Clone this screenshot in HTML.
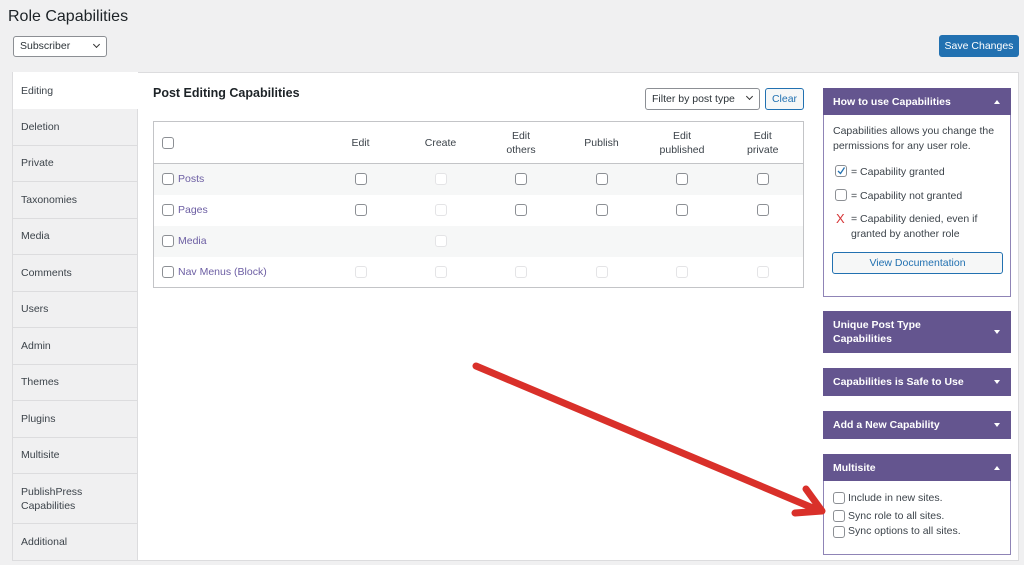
<!DOCTYPE html>
<html><head><style>
*{box-sizing:border-box;margin:0;padding:0}
body{width:1024px;height:565px;overflow:hidden;background:#f0f0f1;font-family:"Liberation Sans",sans-serif;color:#3c434a;position:relative;font-size:10.5px}
.a{position:absolute}
h1{position:absolute;left:8px;top:8px;font-size:16px;font-weight:400;color:#1d2327}
.sel{position:absolute;border:1px solid #8c8f94;border-radius:3px;background:#fff;font-size:10.5px;color:#2c3338;padding-left:6px;line-height:19px}
.sel:after{content:"";position:absolute;right:7px;top:5px;width:4px;height:4px;border-right:1.3px solid #333;border-bottom:1.3px solid #333;transform:rotate(45deg)}
.panel{left:12px;top:72px;width:1007px;height:489px;background:#fff;border:1px solid #dcdcde}
.tab{position:absolute;left:12px;width:126px;background:#f0f0f1;border:1px solid #dcdcde;border-top:none;padding-left:8px;display:flex;align-items:center;font-size:10.5px;color:#3c434a;line-height:14px}
.cb{position:absolute;width:12px;height:12px;border:1px solid #8c8f94;border-radius:3px;background:#fff}
.cb.d{border-color:#e4e4e6}
table{position:absolute;left:153px;top:121px;width:651px;border-collapse:collapse;border:1px solid #c3c4c7;font-size:10.5px}
td{text-align:center;height:31px;padding:0;position:relative;color:#3c434a}
tr.h td{height:42px;border-bottom:1px solid #c3c4c7;line-height:14px}
tr.s td{background:#f6f7f7}
.ph{position:absolute;left:823px;width:188px;background:#64558f;color:#fff;font-weight:700;font-size:10.5px;padding-left:10px;display:flex;align-items:center;line-height:14px}
.ph:after{content:"";position:absolute;right:11px;top:50%;margin-top:-2px;border-left:3px solid transparent;border-right:3px solid transparent;border-top:4px solid #fff}
.ph.up:after{border-top:none;border-bottom:4px solid #fff}
.pb{position:absolute;left:823px;width:188px;border:1px solid #8f84b6;border-top:none;background:#fff}
</style></head><body>
<h1>Role Capabilities</h1>
<div class="sel" style="left:13px;top:36px;width:94px;height:21px">Subscriber</div>
<div class="a" style="left:939px;top:35px;width:80px;height:22px;background:#2271b1;border-radius:3px;color:#fff;font-size:10.5px;text-align:center;line-height:22px">Save Changes</div>
<div class="a panel"></div>
<div class="tab" style="top:72px;height:37px;background:#fff;border:none;border-left:1px solid #dcdcde">Editing</div>
<div class="tab" style="top:109px;height:36.5px">Deletion</div>
<div class="tab" style="top:145.5px;height:36.5px">Private</div>
<div class="tab" style="top:182px;height:36.5px">Taxonomies</div>
<div class="tab" style="top:218.5px;height:36.5px">Media</div>
<div class="tab" style="top:255px;height:36.5px">Comments</div>
<div class="tab" style="top:291.5px;height:36.5px">Users</div>
<div class="tab" style="top:328px;height:36.5px">Admin</div>
<div class="tab" style="top:364.5px;height:36.5px">Themes</div>
<div class="tab" style="top:401px;height:36.5px">Plugins</div>
<div class="tab" style="top:437.5px;height:36.5px">Multisite</div>
<div class="tab" style="top:474px;height:50px">PublishPress<br>Capabilities</div>
<div class="tab" style="top:524px;height:37px">Additional</div>
<div class="a" style="left:153px;top:86px;font-size:12.5px;font-weight:700;color:#1d2327">Post Editing Capabilities</div>
<div class="sel" style="left:645px;top:88px;width:115px;height:22px;line-height:20px">Filter by post type</div>
<div class="a" style="left:765px;top:88px;width:39px;height:22px;border:1px solid #2271b1;border-radius:3px;color:#2271b1;text-align:center;line-height:20px;background:#f6f7f7">Clear</div>
<table>
<tr class="h"><td style="width:167px"><span class="cb" style="left:8px;top:15px"></span></td><td style="width:80px">Edit</td><td style="width:80px">Create</td><td style="width:81px">Edit<br>others</td><td style="width:80px">Publish</td><td style="width:81px">Edit<br>published</td><td>Edit<br>private</td></tr>
<tr class="s"><td style="text-align:left;padding-left:24px;color:#6c5ea3"><span class="cb" style="left:8px;top:9px"></span>Posts</td><td><span class="cb" style="left:34px;top:9px"></span></td><td><span class="cb d" style="left:34px;top:9px"></span></td><td><span class="cb" style="left:34px;top:9px"></span></td><td><span class="cb" style="left:34px;top:9px"></span></td><td><span class="cb" style="left:34px;top:9px"></span></td><td><span class="cb" style="left:34px;top:9px"></span></td></tr>
<tr><td style="text-align:left;padding-left:24px;color:#6c5ea3"><span class="cb" style="left:8px;top:9px"></span>Pages</td><td><span class="cb" style="left:34px;top:9px"></span></td><td><span class="cb d" style="left:34px;top:9px"></span></td><td><span class="cb" style="left:34px;top:9px"></span></td><td><span class="cb" style="left:34px;top:9px"></span></td><td><span class="cb" style="left:34px;top:9px"></span></td><td><span class="cb" style="left:34px;top:9px"></span></td></tr>
<tr class="s"><td style="text-align:left;padding-left:24px;color:#6c5ea3"><span class="cb" style="left:8px;top:9px"></span>Media</td><td></td><td><span class="cb d" style="left:34px;top:9px"></span></td><td></td><td></td><td></td><td></td></tr>
<tr><td style="text-align:left;padding-left:24px;color:#6c5ea3"><span class="cb" style="left:8px;top:9px"></span>Nav Menus (Block)</td><td><span class="cb d" style="left:34px;top:9px"></span></td><td><span class="cb d" style="left:34px;top:9px"></span></td><td><span class="cb d" style="left:34px;top:9px"></span></td><td><span class="cb d" style="left:34px;top:9px"></span></td><td><span class="cb d" style="left:34px;top:9px"></span></td><td><span class="cb d" style="left:34px;top:9px"></span></td></tr>
</table>

<div class="ph up" style="top:88px;height:27px">How to use Capabilities</div>
<div class="pb" style="top:115px;height:182px">
<div class="a" style="left:9px;top:9px;line-height:15px;width:170px">Capabilities allows you change the permissions for any user role.</div>
<span class="cb" style="left:11px;top:50px"><svg width="10" height="10" style="position:absolute;left:0;top:0"><path d="M2 5l2.5 2.5L8.5 1.5" stroke="#2271b1" stroke-width="1.3" fill="none"/></svg></span>
<div class="a" style="left:27px;top:51px">= Capability granted</div>
<span class="cb" style="left:11px;top:74px"></span>
<div class="a" style="left:27px;top:75px">= Capability not granted</div>
<div class="a" style="left:12px;top:96px;color:#d63638;font-size:13px">X</div>
<div class="a" style="left:27px;top:97px;line-height:15px">= Capability denied, even if<br>granted by another role</div>
<div class="a" style="left:8px;top:137px;width:171px;height:22px;border:1px solid #2271b1;border-radius:3px;color:#2271b1;text-align:center;line-height:20px;background:#f6f7f7">View Documentation</div>
</div>
<div class="ph" style="top:311px;height:42px">Unique Post Type<br>Capabilities</div>
<div class="ph" style="top:368px;height:28px">Capabilities is Safe to Use</div>
<div class="ph" style="top:411px;height:28px">Add a New Capability</div>
<div class="ph up" style="top:454px;height:27px">Multisite</div>
<div class="pb" style="top:481px;height:74px">
<span class="cb" style="left:9px;top:11px"></span><div class="a" style="left:24px;top:11px">Include in new sites.</div>
<span class="cb" style="left:9px;top:29px"></span><div class="a" style="left:24px;top:29px">Sync role to all sites.</div>
<span class="cb" style="left:9px;top:45px"></span><div class="a" style="left:24px;top:44px">Sync options to all sites.</div>
</div>
<svg class="a" style="left:0;top:0" width="1024" height="565">
<path d="M476 366L820 511M806 489L822 511L795 513" stroke="#d9302a" stroke-width="7" fill="none" stroke-linecap="round" stroke-linejoin="round"/>
</svg>
</body></html>
